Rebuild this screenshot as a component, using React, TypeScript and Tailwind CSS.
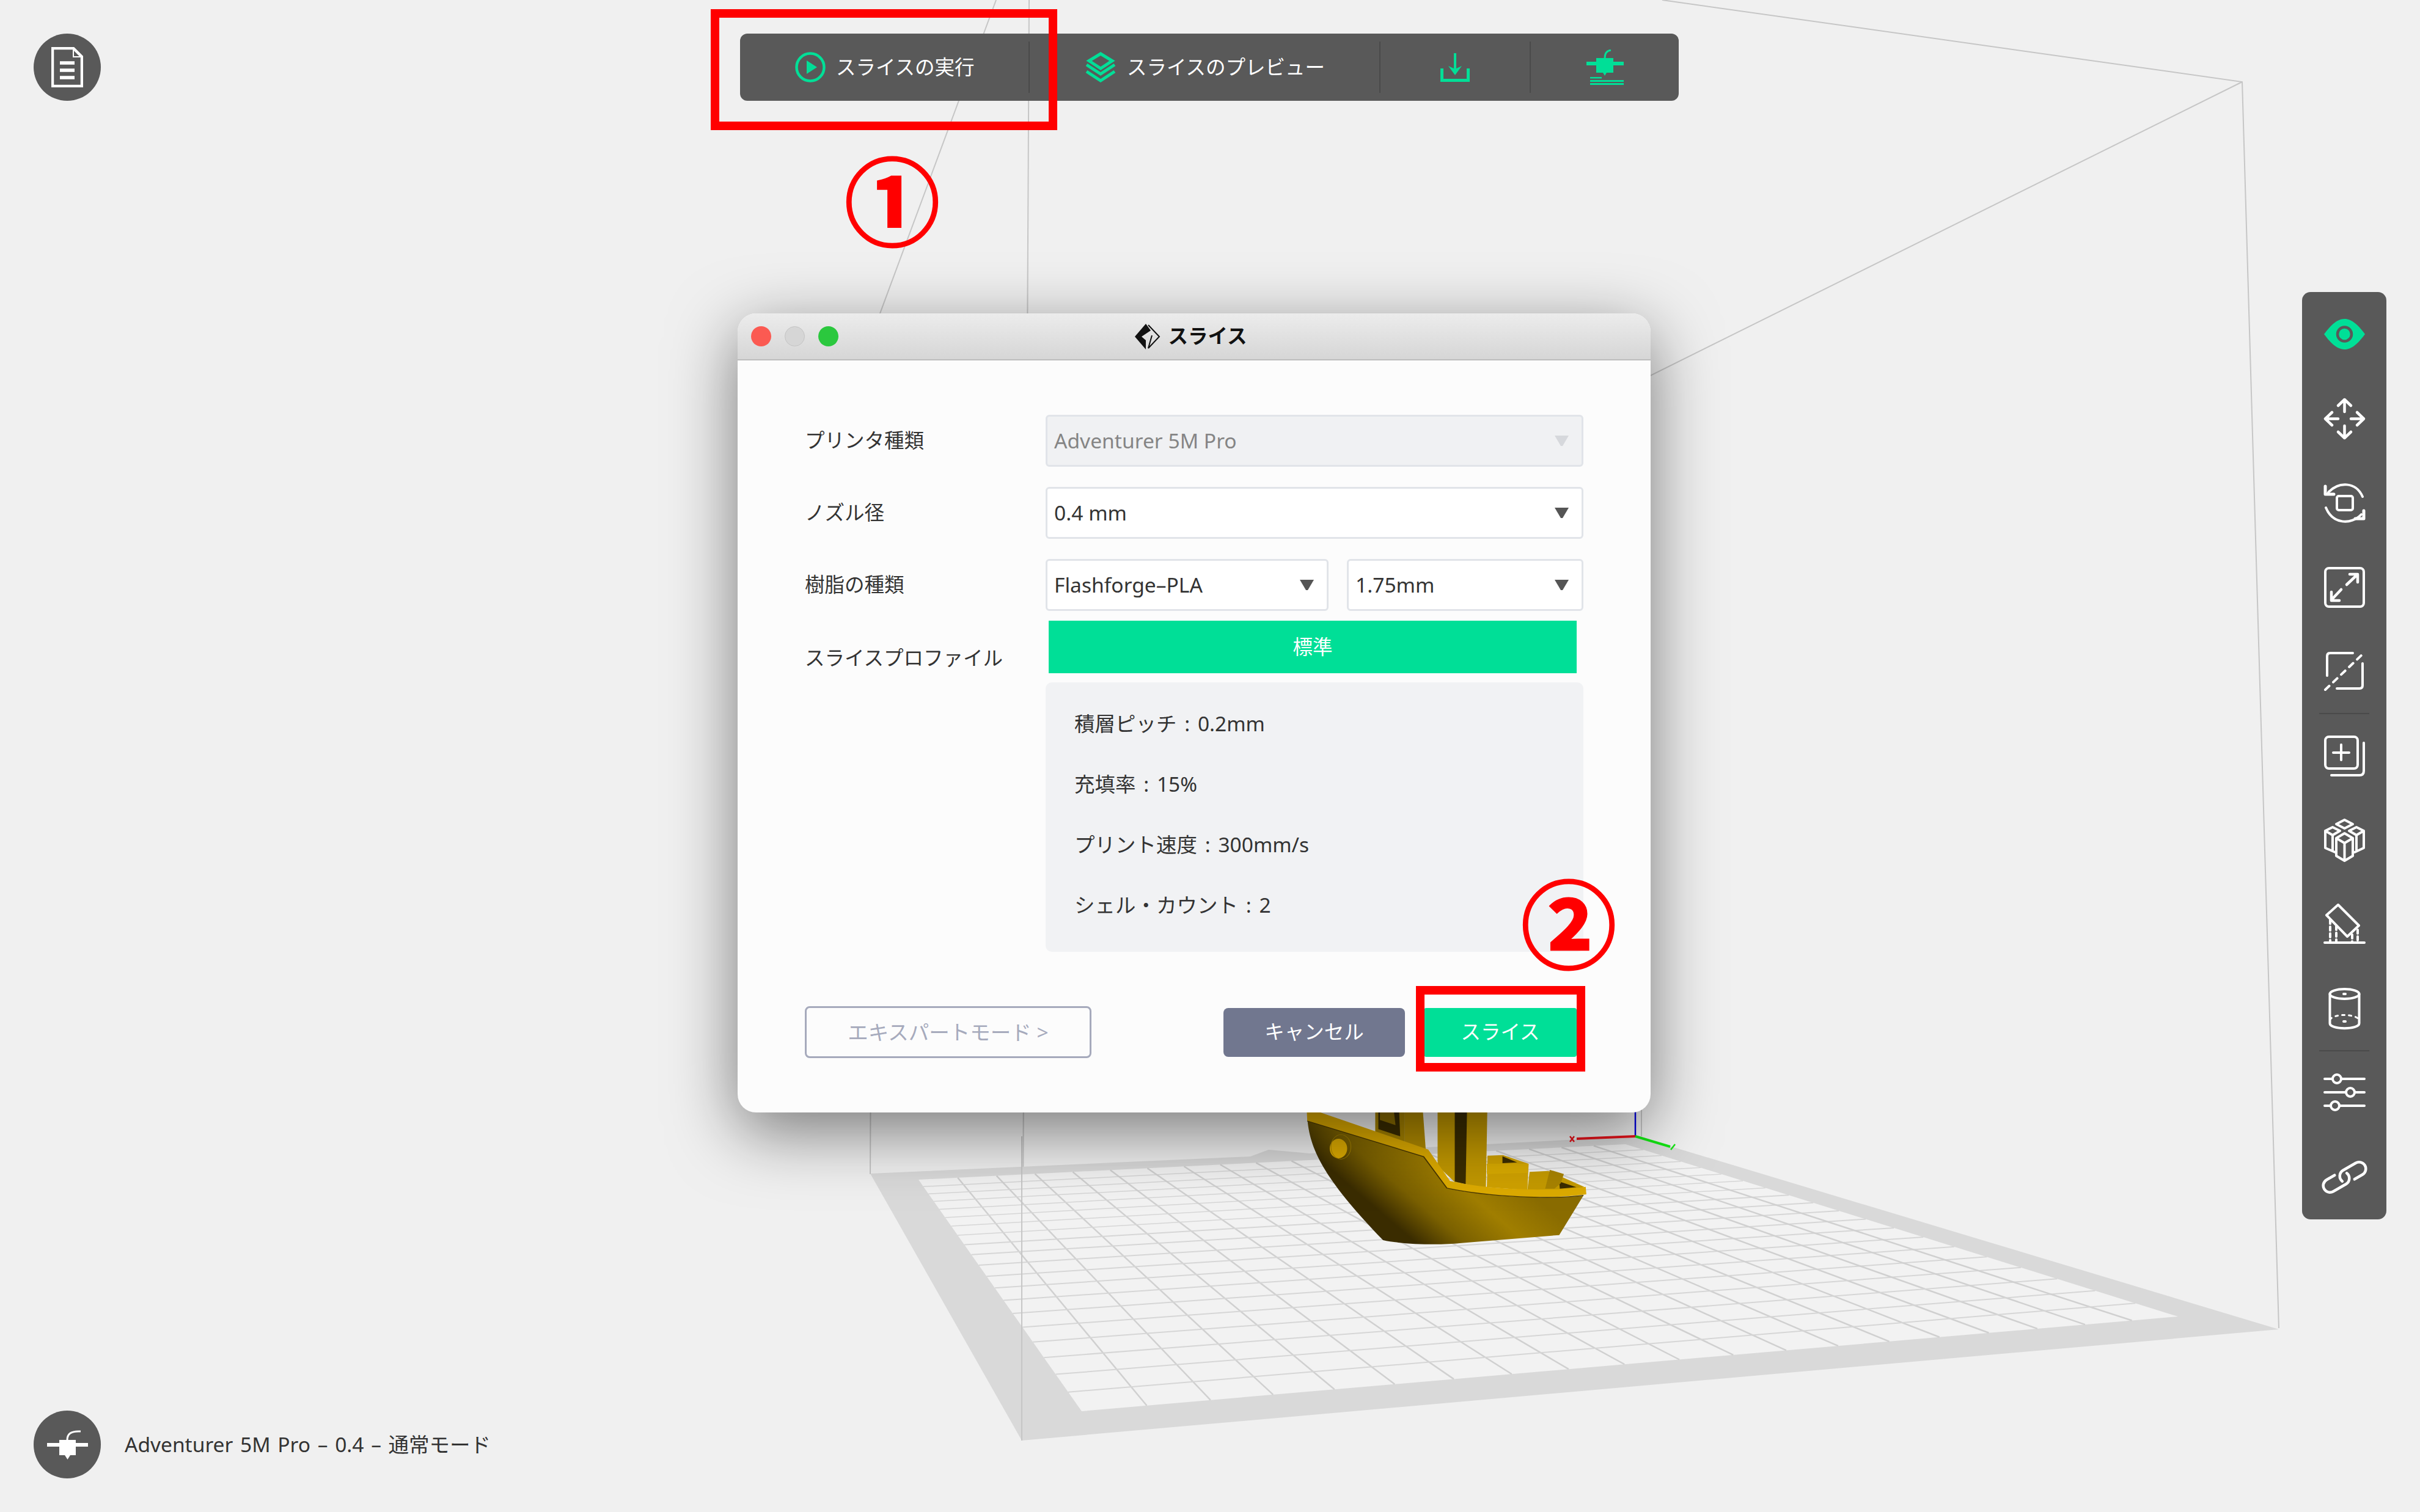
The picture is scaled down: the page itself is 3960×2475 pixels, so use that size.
const FONT = "font-['Noto_Sans','Noto_Sans_CJK_JP',sans-serif]";
const GREEN = "#00DF97";

const BED = {
  tl: [1503, 1931],
  tr: [2660, 1873],
  br: [3564, 2155],
  bl: [1770, 2310],
};

// maps the unit square onto the bed, so the grid keeps its perspective
function bedPoint(u: number, v: number) {
  const [x0, y0] = BED.tl;
  const [x1, y1] = BED.tr;
  const [x2, y2] = BED.br;
  const [x3, y3] = BED.bl;
  const dx1 = x1 - x2;
  const dx2 = x3 - x2;
  const dy1 = y1 - y2;
  const dy2 = y3 - y2;
  const sx = x0 - x1 + x2 - x3;
  const sy = y0 - y1 + y2 - y3;
  const det = dx1 * dy2 - dx2 * dy1;
  const g = (sx * dy2 - dx2 * sy) / det;
  const h = (dx1 * sy - sx * dy1) / det;
  const w = g * u + h * v + 1;
  return [
    ((x1 - x0 + g * x1) * u + (x3 - x0 + h * x3) * v + x0) / w,
    ((y1 - y0 + g * y1) * u + (y3 - y0 + h * y3) * v + y0) / w,
  ];
}

const DIVISIONS = Array.from({ length: 19 }, (_, i) => (i + 1) / 20);

function Boat() {
  return (
    <g transform="translate(1980 1780) scale(0.5102 0.3333)">
      <defs>
        <linearGradient id="hull" gradientUnits="userSpaceOnUse" x1="300" y1="600" x2="800" y2="220">
          <stop offset="0" stopColor="#3a2c00" />
          <stop offset="0.3" stopColor="#3a2c00" />
          <stop offset="0.5" stopColor="#7a6000" />
          <stop offset="0.75" stopColor="#a07e00" />
          <stop offset="1" stopColor="#8a6c00" />
        </linearGradient>
      </defs>
      <path d="M530 60 L625 60 L625 268 L530 225Z" fill="#a58200" />
      <path d="M540 60 L605 60 L610 240 L540 205Z" fill="#3a2c00" />
      <path d="M545 120 L590 120 L595 185 L545 160Z" fill="#8a6c00" />
      <path d="M625 60 L680 60 L692 305 L625 268Z" fill="#b08a00" />
      <path d="M730 60 L890 60 L885 495 L785 465 L730 385Z" fill="#c09700" />
      <path d="M785 60 L825 60 L820 475 L785 462Z" fill="#3a2c00" />
      <path d="M890 335 L940 332 L1022 375 L1018 505 L888 490Z" fill="#cfa100" />
      <path d="M888 375 L1020 375 L1020 420 L888 425Z" fill="#d8aa00" />
      <path d="M938 338 L985 368 L938 372Z" fill="#3a2c00" />
      <path d="M1018 505 L1025 415 L1085 410 L1200 488 L1180 500Z" fill="#c49a00" />
      <path d="M1120 462 L1175 490 L1122 497Z" fill="#3a2c00" />
      <path d="M1075 497 L1090 405 L1135 425 L1125 470 L1105 497Z" fill="#a88300" />
      <path d="M312 150 C320 300 360 440 555 750 C620 772 740 775 800 765 L1120 725 L1198 530 C1100 550 900 540 760 495 L685 340 Z" fill="url(#hull)" />
      <path d="M310 100 L700 305 L770 460 C880 500 1080 515 1205 488 L1207 525 C1100 550 900 540 760 495 L685 340 L312 165 Z" fill="#dcaa00" />
      <path d="M312 165 L685 340 L760 495 C900 540 1100 550 1198 530" fill="none" stroke="#4a3800" strokeWidth="4" />
      <ellipse cx="412" cy="300" rx="28" ry="48" fill="#dcaa00" />
      <ellipse cx="420" cy="292" rx="32" ry="60" fill="none" stroke="#a58200" strokeWidth="2" />
    </g>
  );
}

function Scene() {
  return (
    <svg className="absolute inset-0" width="3960" height="2475" viewBox="0 0 3960 2475">
      <g stroke="#c6c6c6" strokeWidth="2" fill="none">
        <path d="M1630 0 L1430 540 L1424 1922" />
        <path d="M1684 0 L1672 2358" />
        <path d="M2720 0 L3669 134 L3729 2174" />
        <path d="M3669 134 L2686 622 L2686 1860" />
      </g>
      <path d="M1424 1921 L2046 1893 L2076 1882 L2143 1888 L2679 1860 L3729 2176 L1672 2358Z" fill="#d9d9d9" />
      <path d="M1503 1931 L2660 1873 L3564 2155 L1770 2310Z" fill="#f2f2f2" />
      {DIVISIONS.map((t) => {
        const [ax, ay] = bedPoint(t, 0);
        const [bx, by] = bedPoint(t, 1);
        const [cx, cy] = bedPoint(0, t);
        const [dx, dy] = bedPoint(1, t);
        return (
          <g key={t}>
            <line x1={ax} y1={ay} x2={bx} y2={by} stroke="#d0d0d0" strokeWidth="2.500" />
            <line x1={cx} y1={cy} x2={dx} y2={dy} stroke="#d6d6d6" strokeWidth={t < 0.4 ? 1.5 : 2} />
          </g>
        );
      })}
      <path d="M1672 1860 L1672 2358" stroke="#c6c6c6" strokeWidth="2" />
      <Boat />
      <path d="M2676 1820 V1860" stroke="#0000e0" strokeWidth="2.500" />
      <path d="M2676 1860 L2580 1864" stroke="#e8141c" strokeWidth="4" />
      <path d="M2569 1860 L2576 1869 M2576 1860 L2569 1869" stroke="#e8141c" strokeWidth="2.500" />
      <path d="M2676 1860 L2733 1877" stroke="#14e614" strokeWidth="4" />
      <path d="M2741 1873 L2734 1882" stroke="#14e614" strokeWidth="2.500" />
    </svg>
  );
}

function PlayIcon() {
  return (
    <svg width="50" height="50" viewBox="0 0 50 50">
      <circle cx="25" cy="25" r="22.500" fill="none" stroke={GREEN} strokeWidth="4.500" />
      <path d="M19 14 L36 25 L19 36Z" fill={GREEN} />
    </svg>
  );
}

function LayersIcon() {
  return (
    <svg width="50" height="50" viewBox="0 0 50 50" fill="none" stroke={GREEN} strokeWidth="5">
      <path d="M25 3 L44 14.500 L25 27 L6 14.500Z" />
      <path d="M2 21 L25 36 L48 21" />
      <path d="M2 32 L25 47 L48 32" />
    </svg>
  );
}

function DownloadIcon() {
  return (
    <svg width="48" height="47" viewBox="0 0 48 47">
      <path d="M2.500 25 V44.500 H45.500 V25" fill="none" stroke={GREEN} strokeWidth="5" />
      <path d="M24 0 V28" stroke={GREEN} strokeWidth="4" />
      <path d="M13 21 L24 36 L35 21 L24 26Z" fill={GREEN} />
    </svg>
  );
}

function NozzleBedIcon() {
  return (
    <svg width="61" height="58" viewBox="0 0 61 58" fill={GREEN}>
      <path d="M30 14 C30 6 33 2 40 1" fill="none" stroke={GREEN} strokeWidth="3" />
      <rect x="0" y="20" width="61" height="6" />
      <path d="M16 14 H44 V38 H33 L30 43 L27 38 H16Z" />
      <rect x="6" y="45" width="19" height="2.500" />
      <rect x="6" y="50" width="55" height="3" />
      <rect x="6" y="55" width="55" height="3" />
    </svg>
  );
}

function NozzleIcon() {
  return (
    <svg width="67" height="49" viewBox="0 0 67 49" fill="#fff">
      <path d="M33 17 C33 8 38 2 55 3" fill="none" stroke="#fff" strokeWidth="3" />
      <rect x="0" y="22" width="67" height="6" />
      <path d="M20 17 H47 V42 H38 L33.500 49 L29 42 H20Z" />
    </svg>
  );
}

function DocIcon() {
  return (
    <svg width="52" height="66" viewBox="0 0 52 66" fill="none" stroke="#fff" strokeWidth="4.500">
      <path d="M2 2 H36 L50 16 V64 H2Z" />
      <path d="M36 2 V16 H50" strokeWidth="2" />
      <path d="M14 26 H38 M14 38 H38 M14 50 H38" strokeWidth="5.500" />
    </svg>
  );
}

function EyeIcon() {
  return (
    <svg width="67" height="50" viewBox="0 0 67 50">
      <path d="M0 25 C14 6 24 0 33.500 0 C43 0 53 6 67 25 C53 44 43 50 33.500 50 C24 50 14 44 0 25Z" fill={GREEN} />
      <circle cx="33.500" cy="25" r="11.500" fill={GREEN} stroke="#595959" strokeWidth="4.500" />
    </svg>
  );
}

function ToolIcon({ children, height = 67 }: { children: React.ReactNode; height?: number }) {
  return (
    <svg
      width="67"
      height={height}
      viewBox={`0 0 67 ${height}`}
      fill="none"
      stroke="#fff"
      strokeWidth="4"
      strokeLinecap="round"
      strokeLinejoin="round"
      className="overflow-visible"
    >
      {children}
    </svg>
  );
}

const TOOLS: { key: string; height?: number; body: React.ReactNode }[] = [
  {
    key: "move",
    body: (
      <g strokeWidth="4.500">
        <path d="M33.500 2 V22 M23 12 L33.500 2 L44 12" />
        <path d="M33.500 65 V45 M23 55 L33.500 65 L44 55" />
        <path d="M2 33.500 H23 M13 23 L2 33.500 L13 44" />
        <path d="M65 33.500 H44 M54 23 L65 33.500 L54 44" />
      </g>
    ),
  },
  {
    key: "rotate",
    body: (
      <>
        <path d="M63 23 C52 -2 24 -2 7 16" />
        <path d="M2 6 V19 H16" strokeWidth="5" />
        <path d="M3 41 C14 68 44 70 61 52" />
        <path d="M65 46 V59 H51" strokeWidth="5" />
        <rect x="21" y="22" width="26" height="23" rx="3" />
      </>
    ),
  },
  {
    key: "scale",
    body: (
      <>
        <rect x="2" y="2" width="63" height="63" rx="6" />
        <path d="M37 29 L54 13 M42 12 H55 V25" strokeWidth="4.500" />
        <path d="M28 37 L12 54 M12 41 V55 H25" strokeWidth="4.500" />
      </>
    ),
  },
  {
    key: "mirror",
    body: (
      <>
        <path d="M5 40 V8 Q5 3 10 3 L47 3" />
        <path d="M63 20 V56 Q63 61 58 61 L21 61" />
        <path d="M2 63 L66 2" strokeDasharray="9 9" />
      </>
    ),
  },
  {
    key: "duplicate",
    body: (
      <>
        <rect x="2" y="2" width="53" height="52" rx="6" />
        <path d="M28 15 V40 M15 28 H41" />
        <path d="M65 12 V58 Q65 65 58 65 H12" />
      </>
    ),
  },
  {
    key: "cubes",
    height: 69,
    body: (
      <>
        <path d="M33.500 1 L47 8 L33.500 15 L20 8Z" />
        <path d="M33.500 23 L47 31 L33.500 39 L20 31Z M20 31 V60 L33.500 68 L47 60 V31 M33.500 39 V68" />
        <path d="M14 13 L26 19 L14 26 L2 19Z M2 19 V47 L18 54 M14 26 V50" />
        <path d="M53 13 L41 19 L53 26 L65 19Z M65 19 V47 L50 54 M53 26 V50" />
      </>
    ),
  },
  {
    key: "support",
    body: (
      <>
        <path d="M4 18 L23 1 L57 35 L38 53Z" />
        <path d="M1 63 H66" />
        <path d="M10 26 V63 M20 36 V63 M46 50 V63 M55 42 V63" strokeDasharray="6 5" />
      </>
    ),
  },
  {
    key: "volume",
    height: 68,
    body: (
      <>
        <ellipse cx="33.500" cy="10" rx="24" ry="8" />
        <path d="M9.500 10 V58 C9.500 69 57.500 69 57.500 58 V10" />
        <path d="M9.500 52 C16 42 50 42 57.500 52" strokeDasharray="4 7" strokeWidth="3" />
        <path d="M32 10 H35 M32 55 H35" />
      </>
    ),
  },
  {
    key: "settings",
    body: (
      <>
        <path d="M1 10 H14 M28 10 H66" />
        <ellipse cx="21" cy="10" rx="7" ry="7" />
        <path d="M1 32 H36 M50 32 H66" />
        <ellipse cx="43" cy="32" rx="7" ry="7" />
        <path d="M1 54 H11 M25 54 H66" />
        <ellipse cx="18" cy="54" rx="7" ry="7" />
      </>
    ),
  },
  {
    key: "link",
    body: (
      <g transform="rotate(-30 33.500 33)" strokeWidth="4.500">
        <path d="M46 44 H61 A11 11 0 0 0 61 22 H37 A11 11 0 0 0 27 37" />
        <path d="M21 22 H6 A11 11 0 0 0 6 44 H30 A11 11 0 0 0 40 29" />
      </g>
    ),
  },
];

function Toolbar() {
  return (
    <div className="absolute left-[1211px] top-[55px] flex h-[110px] w-[1536px] items-center rounded-[12px] bg-[#595959] text-[32.500px] text-white">
      <div className="flex w-[472px] items-center gap-[17px] pl-[90px]">
        <PlayIcon />
        <span>スライスの実行</span>
      </div>
      <div className="h-[84px] w-[2px] bg-[#4a4a4a]" />
      <div className="flex w-[572px] items-center gap-[18px] pl-[91px]">
        <LayersIcon />
        <span>スライスのプレビュー</span>
      </div>
      <div className="h-[84px] w-[2px] bg-[#4a4a4a]" />
      <div className="flex w-[244px] items-center justify-center">
        <DownloadIcon />
      </div>
      <div className="h-[84px] w-[2px] bg-[#4a4a4a]" />
      <div className="flex flex-1 items-center justify-center">
        <NozzleBedIcon />
      </div>
    </div>
  );
}

function SideBar() {
  return (
    <div className="absolute left-[3767px] top-[478px] flex w-[138px] flex-col items-center rounded-[14px] bg-[#595959]">
      <div className="flex h-[138px] items-center">
        <EyeIcon />
      </div>
      {TOOLS.map((tool, i) => (
        <div key={tool.key} className="contents">
          <div className="flex h-[138px] items-center">
            <ToolIcon height={tool.height}>{tool.body}</ToolIcon>
          </div>
          {(i === 3 || i === 7) && <div className="-my-px h-[2px] w-[82px] bg-[#4a4a4a]" />}
        </div>
      ))}
    </div>
  );
}

function Arrow({ color = "#555555" }: { color?: string }) {
  return (
    <svg width="23" height="17" viewBox="0 0 23 17">
      <path d="M0 0 H23 L13 17 H10Z" fill={color} />
    </svg>
  );
}

function Select({ value, className, disabled }: { value: string; className?: string; disabled?: boolean }) {
  return (
    <div
      className={`flex h-[85px] items-center justify-between rounded-[6px] border-[3px] border-[#e1e4e9] pl-[11px] pr-[21px] text-[33.600px] ${
        disabled ? "bg-[#f0f1f3] text-[#858585]" : "bg-white text-[#333333]"
      } ${className ?? ""}`}
    >
      <span>{value}</span>
      <Arrow color={disabled ? "#d6d8dc" : "#555555"} />
    </div>
  );
}

function Dialog() {
  return (
    <div className="absolute left-[1207px] top-[513px] h-[1308px] w-[1494px] overflow-hidden rounded-[30px] bg-[#fcfcfc] text-[32.500px] text-[#333333] shadow-[0_30px_110px_rgba(0,0,0,0.5)]">
      <div className="relative flex h-[77px] items-center justify-center gap-[12px] border-b-[2px] border-[#bcbcbc] bg-gradient-to-b from-[#ececec] to-[#d6d6d6] pr-[12px] font-bold text-[#111111]">
        <div className="absolute left-[22px] flex gap-[22px]">
          <div className="h-[33px] w-[33px] rounded-full bg-[#fb5a52]" />
          <div className="h-[33px] w-[33px] rounded-full border border-[#c4c4c4] bg-[#d6d6d6]" />
          <div className="h-[33px] w-[33px] rounded-full bg-[#2bc83e]" />
        </div>
        <svg width="44" height="44" viewBox="0 0 44 44">
          <path d="M20 1 L2 22 L20 43 L20 28 L13 22 L28 12Z" fill="#111111" />
          <path d="M24 3 L42 22 L24 41 L30 20" fill="none" stroke="#111111" strokeWidth="2" />
        </svg>
        <span>スライス</span>
      </div>
      <div className="pl-[110px] pr-[110px] pt-[89px]">
        <div className="grid grid-cols-[394px_880px]">
          <div className="flex flex-col">
            <div className="flex h-[85px] items-center">プリンタ種類</div>
            <div className="mt-[33px] flex h-[85px] items-center">ノズル径</div>
            <div className="mt-[33px] flex h-[85px] items-center">樹脂の種類</div>
            <div className="mt-[35px] flex h-[85px] items-center">スライスプロファイル</div>
          </div>
          <div className="flex flex-col">
            <Select value="Adventurer 5M Pro" disabled />
            <Select value="0.4 mm" className="mt-[33px]" />
            <div className="mt-[33px] grid grid-cols-[463px_387px] gap-[30px]">
              <Select value="Flashforge–PLA" />
              <Select value="1.75mm" />
            </div>
            <div className="ml-[5px] mr-[11px] mt-[16px] flex h-[86px] items-center justify-center bg-[#00DF97] text-white">
              標準
            </div>
            <div className="mt-[15px] flex h-[441px] flex-col rounded-[10px] bg-[#f1f2f4] pl-[47px] pt-[18px] text-[33.500px] [word-spacing:4px]">
              <div className="flex h-[99px] items-center">積層ピッチ : 0.2mm</div>
              <div className="flex h-[99px] items-center">充填率 : 15%</div>
              <div className="flex h-[99px] items-center">プリント速度 : 300mm/s</div>
              <div className="flex h-[99px] items-center">シェル・カウント : 2</div>
            </div>
          </div>
        </div>
        <div className="mt-[89px] flex items-center justify-between pr-[11px]">
          <div className="flex h-[85px] w-[469px] items-center justify-center rounded-[8px] border-[3px] border-[#a6aabc] text-[33.500px] text-[#a6aabc]">
            エキスパートモード &gt;
          </div>
          <div className="flex items-center gap-[31px] text-white">
            <div className="flex h-[80px] w-[297px] items-center justify-center rounded-[8px] bg-[#71778f]">
              キャンセル
            </div>
            <div className="flex h-[80px] w-[250px] items-center justify-center rounded-[4px] bg-[#00DF97]">
              スライス
            </div>
          </div>
        </div>
      </div>
    </div>
  );
}

export default function App() {
  return (
    <div className={`relative h-[2475px] w-[3960px] overflow-hidden bg-[#f0f0f0] ${FONT}`}>
      <Scene />

      <div className="absolute left-[55px] top-[55px] flex h-[110px] w-[110px] items-center justify-center rounded-full bg-[#595959]">
        <DocIcon />
      </div>

      <Toolbar />
      <SideBar />
      <Dialog />

      <div className="absolute left-[55px] top-[2309px] flex items-center gap-[39px] text-[33.500px] text-[#333333] [word-spacing:3px]">
        <div className="flex h-[111px] w-[110px] items-center justify-center rounded-full bg-[#595959]">
          <NozzleIcon />
        </div>
        <span>Adventurer 5M Pro – 0.4 – 通常モード</span>
      </div>

      {/* annotations drawn over the screenshot */}
      <div className="absolute left-[1163px] top-[15px] h-[198px] w-[567px] border-[14px] border-[#ff0000]" />
      <div className="absolute left-[2317px] top-[1614px] h-[140px] w-[277px] border-[14px] border-[#ff0000]" />
      <div className="absolute left-[1380px] top-[240px] flex h-[180px] w-[160px] items-center justify-center text-[156px] font-bold leading-none text-[#ff0000] [-webkit-text-stroke:3px_#ff0000]">
        ①
      </div>
      <div className="absolute left-[2487px] top-[1423px] flex h-[180px] w-[160px] items-center justify-center text-[156px] font-bold leading-none text-[#ff0000] [-webkit-text-stroke:3px_#ff0000]">
        ②
      </div>
    </div>
  );
}
